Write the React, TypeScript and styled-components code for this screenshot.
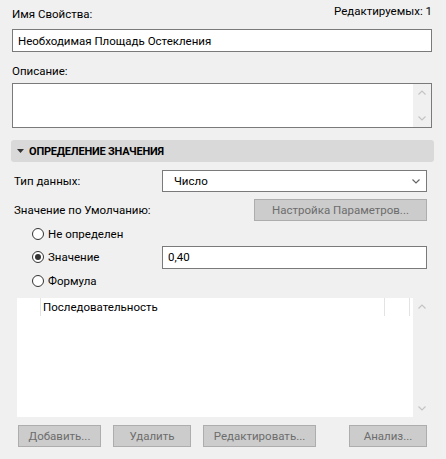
import React from "react";
import styled, { createGlobalStyle } from "styled-components";

const GlobalStyle = createGlobalStyle`
    html, body {
        margin: 0;
        padding: 0;
        background: #f0f0f0;
    }
    body {
        font-family: Roboto, "Noto Sans", sans-serif;
        font-size: 11.5px;
        color: #000;
    }
`;

const Panel = styled.div`
    width: 446px;
    height: 459px;
    box-sizing: border-box;
    padding: 6px 14px 0 12px;
    display: flex;
    flex-direction: column;
    overflow: hidden;
`;

const TopRow = styled.div`
    display: flex;
    justify-content: space-between;
    align-items: flex-start;
    height: 23px;
`;

const Label = styled.div<{ $indent?: number }>`
    line-height: 16px;
    padding-left: ${(p) => p.$indent ?? 0}px;
    white-space: nowrap;
`;

const Counter = styled.div`
    line-height: 16px;
    margin-top: -3px;
`;

const TextInput = styled.div<{ $width?: number }>`
    box-sizing: border-box;
    height: 23px;
    width: ${(p) => (p.$width ? `${p.$width}px` : "100%")};
    background: #fff;
    border: 1px solid #7a7a7a;
    padding: 0 5px;
    display: flex;
    align-items: center;
    white-space: nowrap;
`;

const DescLabel = styled(Label)`
    margin-top: 11px;
    height: 20px;
`;

const TextArea = styled.div`
    box-sizing: border-box;
    height: 45px;
    background: #fff;
    border: 1px solid #7a7a7a;
    display: flex;
    justify-content: flex-end;
`;

const ScrollTrack = styled.div<{ $bg?: string }>`
    width: ${(p) => (p.$bg ? "18px" : "17px")};
    background: ${(p) => p.$bg ?? "#f0f0f0"};
    display: flex;
    flex-direction: column;
    justify-content: space-between;
    align-items: center;
    padding: 6px 0;
    box-sizing: border-box;
`;

const SectionHeader = styled.div`
    margin: 12px -2px 0 -1px;
    height: 22px;
    background: #d9d9d9;
    border-radius: 3px;
    display: flex;
    align-items: center;
    padding-left: 6px;
    gap: 5px;
    font-size: 11px;
    font-weight: 700;
    letter-spacing: -0.2px;
`;

const FieldRow = styled.div<{ $top: number }>`
    display: flex;
    align-items: center;
    justify-content: space-between;
    margin-top: ${(p) => p.$top}px;
    height: 22px;
    padding-right: 5px;
`;

const Select = styled(TextInput)`
    height: 22px;
    justify-content: space-between;
    padding: 0 6px 0 11px;
`;

const GrayButton = styled.div<{ $width: number }>`
    box-sizing: border-box;
    width: ${(p) => p.$width}px;
    height: 22px;
    background: #cccccc;
    border: 1px solid #adadad;
    color: #6d6d6d;
    display: flex;
    align-items: center;
    justify-content: center;
    white-space: nowrap;
`;

const RadioRow = styled.div<{ $top: number }>`
    display: flex;
    align-items: center;
    justify-content: space-between;
    height: 22px;
    margin-top: ${(p) => p.$top}px;
    padding: 0 5px 0 20px;
`;

const RadioLabel = styled.div`
    display: flex;
    align-items: center;
    gap: 4px;
`;

const RadioCircle = styled.span<{ $checked?: boolean }>`
    box-sizing: border-box;
    width: 12px;
    height: 12px;
    border-radius: 50%;
    border: 1px solid #333;
    background: #fff;
    display: flex;
    align-items: center;
    justify-content: center;

    &::after {
        content: "";
        width: 6px;
        height: 6px;
        border-radius: 50%;
        background: ${(p) => (p.$checked ? "#333" : "transparent")};
    }
`;

const ListWrap = styled.div`
    margin: 6px 2px 0 5px;
    height: 119px;
    display: flex;
`;

const ListBody = styled.div`
    flex: 1;
    background: #fff;
    display: flex;
    flex-direction: column;
`;

const ListHead = styled.div`
    display: grid;
    grid-template-columns: 24px 344px 25px;
    height: 18px;
    margin-right: 2px;
`;

const HeadCell = styled.div<{ $line?: boolean }>`
    border-right: ${(p) => (p.$line ? "1px solid #e3e3e3" : "none")};
    padding-left: 2px;
    line-height: 18px;
    white-space: nowrap;

    &:first-child {
        border-right: 1px solid #e3e3e3;
    }
`;

const ButtonBar = styled.div`
    display: flex;
    justify-content: space-between;
    margin-top: 8px;
    padding: 0 5px 0 6px;
`;

const BarLeft = styled.div`
    display: flex;
    gap: 12px;
`;

const Chevron = ({ up, color }: { up?: boolean; color: string }) => (
    <svg width="8" height="5" viewBox="0 0 8 5">
        <path
            d={up ? "M0.5 4.5 L4 1 L7.5 4.5" : "M0.5 0.5 L4 4 L7.5 0.5"}
            fill="none"
            stroke={color}
            strokeWidth="1.2"
        />
    </svg>
);

const Triangle = () => (
    <svg width="7" height="4" viewBox="0 0 7 4">
        <path d="M0 0 H7 L3.5 4 Z" fill="#333" />
    </svg>
);

const App = () => {
    return (
        <Panel>
            <GlobalStyle />
            <TopRow>
                <Label>Имя Свойства:</Label>
                <Counter>Редактируемых: 1</Counter>
            </TopRow>
            <TextInput>Необходимая Площадь Остекления</TextInput>
            <DescLabel>Описание:</DescLabel>
            <TextArea>
                <ScrollTrack $bg="#f0f0f0">
                    <Chevron up color="#c4c4c4" />
                    <Chevron color="#c4c4c4" />
                </ScrollTrack>
            </TextArea>

            <SectionHeader>
                <Triangle />
                ОПРЕДЕЛЕНИЕ ЗНАЧЕНИЯ
            </SectionHeader>

            <FieldRow $top={8}>
                <Label $indent={2}>Тип данных:</Label>
                <Select $width={265}>
                    Число
                    <Chevron color="#666" />
                </Select>
            </FieldRow>
            <FieldRow $top={7}>
                <Label $indent={2}>Значение по Умолчанию:</Label>
                <GrayButton $width={173}>Настройка Параметров...</GrayButton>
            </FieldRow>

            <RadioRow $top={2}>
                <RadioLabel>
                    <RadioCircle />
                    Не определен
                </RadioLabel>
            </RadioRow>
            <RadioRow $top={1}>
                <RadioLabel>
                    <RadioCircle $checked />
                    Значение
                </RadioLabel>
                <TextInput $width={265}>0,40</TextInput>
            </RadioRow>
            <RadioRow $top={2}>
                <RadioLabel>
                    <RadioCircle />
                    Формула
                </RadioLabel>
            </RadioRow>

            <ListWrap>
                <ListBody>
                    <ListHead>
                        <HeadCell />
                        <HeadCell $line>Последовательность</HeadCell>
                        <HeadCell $line />
                    </ListHead>
                </ListBody>
                <ScrollTrack>
                    <Chevron up color="#c4c4c4" />
                    <Chevron color="#c4c4c4" />
                </ScrollTrack>
            </ListWrap>

            <ButtonBar>
                <BarLeft>
                    <GrayButton $width={83}>Добавить...</GrayButton>
                    <GrayButton $width={78}>Удалить</GrayButton>
                    <GrayButton $width={113}>Редактировать...</GrayButton>
                </BarLeft>
                <GrayButton $width={78}>Анализ...</GrayButton>
            </ButtonBar>
        </Panel>
    );
};

export default App;
